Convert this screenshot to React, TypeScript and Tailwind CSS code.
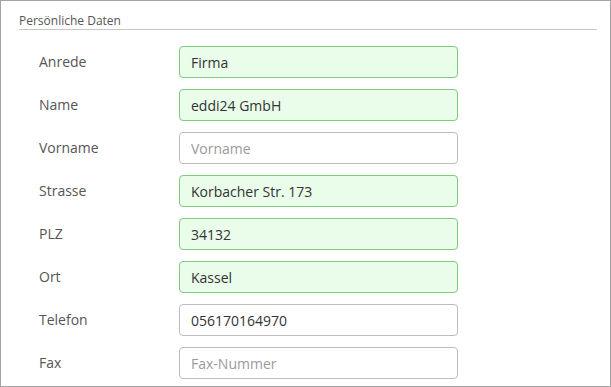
import React from 'react';

type Field = { label: string; value?: string; placeholder?: string };

const FIELDS: Field[] = [
  { label: 'Anrede', value: 'Firma' },
  { label: 'Name', value: 'eddi24 GmbH' },
  { label: 'Vorname', placeholder: 'Vorname' },
  { label: 'Strasse', value: 'Korbacher Str. 173' },
  { label: 'PLZ', value: '34132' },
  { label: 'Ort', value: 'Kassel' },
  { label: 'Telefon', value: '056170164970', placeholder: 'Telefon' },
  { label: 'Fax', placeholder: 'Fax-Nummer' },
];

// fields that passed validation get the green look
const VALID = ['Anrede', 'Name', 'Strasse', 'PLZ', 'Ort'];

export default function App() {
  return (
    <div
      className="w-[611px] h-[387px] bg-white border border-[#a3a3a3] pl-[18px] pr-[13px] pt-[11px] overflow-hidden"
      style={{ fontFamily: '"Open Sans", "Liberation Sans", sans-serif' }}
    >
      <div className="text-[12px] leading-[17px] text-[#555] border-b border-[#c8c8c8]">Persönliche Daten</div>

      <div className="mt-[16px] pl-[20px] flex flex-col gap-[11px]">
        {FIELDS.map(f => {
          const valid = VALID.includes(f.label);
          return (
            <div key={f.label} className="flex items-center h-[32px]">
              <label className="w-[140px] pb-[2px] text-[14px] text-[#555]">{f.label}</label>
              <input
                readOnly
                defaultValue={f.value}
                placeholder={f.placeholder}
                className={`w-[279px] h-[32px] rounded-[4px] border px-[11px] text-[14px] text-[#333] placeholder:text-[#9a9a9a] outline-none ${
                  valid ? 'border-[#7fcc7f] bg-[#eafdea]' : 'border-[#bdbdbd] bg-white'
                }`}
                style={{ fontFamily: '"Open Sans", "Liberation Sans", sans-serif' }}
              />
            </div>
          );
        })}
      </div>
    </div>
  );
}
